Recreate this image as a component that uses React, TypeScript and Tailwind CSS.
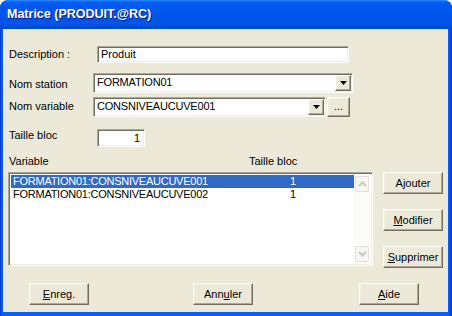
import React from 'react';

const raised =
  'bg-[#ece9d8] border border-t-white border-l-white border-r-[#716f64] border-b-[#716f64] shadow-[inset_-1px_-1px_0_#aca899,inset_1px_1px_0_#f1efe2]';
const sunken =
  'border border-t-[#aca899] border-l-[#aca899] border-r-white border-b-white shadow-[inset_1px_1px_0_#716f64,inset_-1px_-1px_0_#f1efe2]';

function Btn({ children, className = '' }: { children: React.ReactNode; className?: string }) {
  return (
    <button className={`${raised} h-[22px] w-[60px] flex items-center justify-center text-[11px] leading-[13px] text-black ${className}`}>
      {children}
    </button>
  );
}

function DropArrow() {
  return (
    <div className={`${raised} w-[16px] h-[16px] flex items-center justify-center shrink-0`}>
      <svg width="7" height="4" viewBox="0 0 7 4">
        <path d="M0 0h7L3.5 4z" fill="#000" />
      </svg>
    </div>
  );
}

function Combo({ value, width }: { value: string; width: string }) {
  return (
    <div className={`${sunken} ${width} h-[20px] bg-white flex p-px`}>
      <span className="flex-1 pl-[2px] pt-[1px] leading-[13px] tracking-[-0.2px] bg-white">{value}</span>
      <DropArrow />
    </div>
  );
}

function ScrollArrow({ up }: { up?: boolean }) {
  return (
    <div className="h-[16px] mx-px rounded-[2px] border border-[#e2dfd3] bg-[#f7f6f1] flex items-center justify-center">
      <svg width="9" height="6" viewBox="0 0 9 6">
        <path
          d={up ? 'M1 5l3.5-3.5L8 5' : 'M1 1l3.5 3.5L8 1'}
          fill="none"
          stroke="#cac8bd"
          strokeWidth="2"
        />
      </svg>
    </div>
  );
}

const rows = [
  { name: 'FORMATION01:CONSNIVEAUCUVE001', size: '1', selected: true },
  { name: 'FORMATION01:CONSNIVEAUCUVE002', size: '1', selected: false },
];

export default function App() {
  return (
    <div className="w-[452px] h-[316px] bg-white font-[family-name:'Liberation_Sans',Arial,sans-serif] text-[11px] text-black">
      <div className="w-full h-full flex flex-col rounded-t-[8px] bg-[linear-gradient(to_right,#0831d9,#0a5ff0_2px,#0a5ff0_448px,#0831d9)] overflow-hidden">
        {/* title bar */}
        <div className="h-[29px] shrink-0 flex items-center pl-[7px] bg-[linear-gradient(to_bottom,#2a8cff_0px,#0860f5_2px,#0058ee_5px,#0055ea_16px,#0055e5_24px,#0046cc_29px)]">
          <span className="text-white font-bold text-[12.5px] leading-[15px] [text-shadow:1px_1px_0_#0a1883]">
            Matrice (PRODUIT.@RC)
          </span>
        </div>

        {/* client */}
        <div className="ml-[3px] mr-[4px] mb-[4px] flex-1 bg-[#ece9d8] flex flex-col leading-[13px]">
          {/* Description */}
          <div className="mt-[17px] h-[17px] flex">
            <span className="ml-[6px] w-[88px] pt-[2px]">Description :</span>
            <div className={`${sunken} w-[252px] h-[17px] bg-white pl-[3px] pt-[1px]`}>Produit</div>
          </div>

          {/* Nom station */}
          <div className="mt-[10px] h-[20px] flex">
            <span className="ml-[6px] w-[84px] pt-[5px]">Nom station</span>
            <Combo value="FORMATION01" width="w-[260px]" />
          </div>

          {/* Nom variable */}
          <div className="mt-[4px] h-[20px] flex">
            <span className="ml-[6px] w-[84px] pt-[3px]">Nom variable</span>
            <Combo value="CONSNIVEAUCUVE001" width="w-[233px]" />
            <button className={`${raised} ml-px w-[23px] h-[20px] flex items-end justify-center pb-[4px] text-[11px] leading-[11px]`}>
              ...
            </button>
          </div>

          {/* Taille bloc */}
          <div className="mt-[12px] h-[18px] flex">
            <span className="ml-[6px] w-[88px] pt-0">Taille bloc</span>
            <div className={`${sunken} w-[48px] h-[18px] bg-white flex justify-end items-center pr-[4px]`}>1</div>
          </div>

          {/* headers */}
          <div className="mt-[8px] h-[15px] flex">
            <span className="ml-[6px] w-[240px]">Variable</span>
            <span>Taille bloc</span>
          </div>

          {/* list + side buttons */}
          <div className="mt-[2px] flex items-start">
            <div className={`${sunken} ml-[5px] w-[365px] h-[94px] bg-white flex p-[2px]`}>
              <div className="flex-1 flex flex-col">
                {rows.map((r) => (
                  <div
                    key={r.name}
                    className={`h-[13px] flex ${r.selected ? 'bg-[#316ac5] text-white' : ''}`}
                  >
                    <span className="w-[279px] pl-[2px] tracking-[-0.25px]">{r.name}</span>
                    <span>{r.size}</span>
                  </div>
                ))}
              </div>
              <div className="w-[16px] h-full bg-[#fbfbf8] flex flex-col justify-between py-px">
                <ScrollArrow up />
                <ScrollArrow />
              </div>
            </div>
            <div className="ml-[10px] flex flex-col gap-[15px]">
              <Btn>Ajouter</Btn>
              <Btn>
                <span className="underline underline-offset-1">M</span>odifier
              </Btn>
              <Btn>
                <span className="underline underline-offset-1">S</span>upprimer
              </Btn>
            </div>
          </div>

          {/* bottom buttons */}
          <div className="mt-[15px] flex">
            <Btn className="ml-[26px]">
              <span className="underline underline-offset-1">E</span>nreg.
            </Btn>
            <Btn className="ml-[104px]">
              Ann<span className="underline underline-offset-1">u</span>ler
            </Btn>
            <Btn className="ml-[106px]">
              <span className="underline underline-offset-1">A</span>ide
            </Btn>
          </div>
        </div>
      </div>
    </div>
  );
}
